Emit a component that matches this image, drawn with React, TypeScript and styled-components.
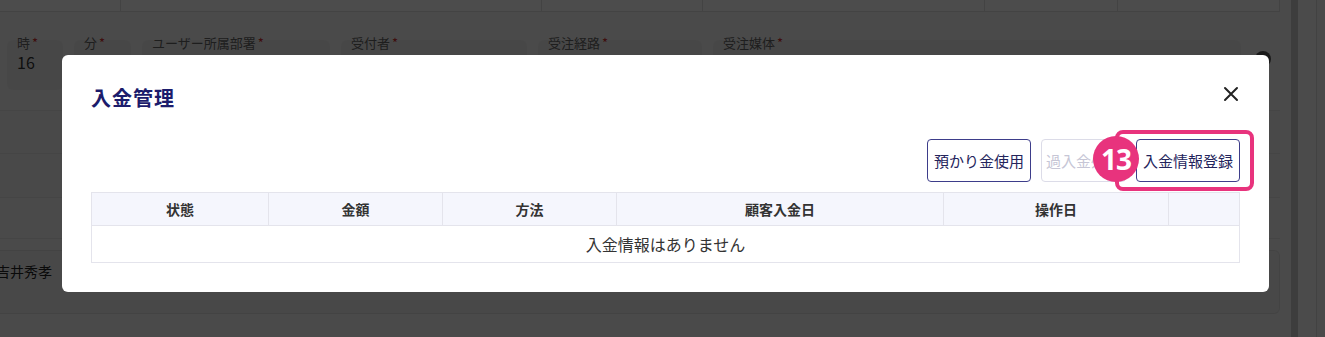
import React from "react";
import styled, { createGlobalStyle } from "styled-components";

const GlobalStyle = createGlobalStyle`
  html, body {
    margin: 0;
    padding: 0;
  }
  body {
    width: 1325px;
    height: 337px;
    overflow: hidden;
    background: #fff;
    font-family: "Noto Sans CJK JP", "Noto Sans", sans-serif;
    color: #333;
  }
  * {
    box-sizing: border-box;
  }
`;

const Page = styled.div`
  display: flex;
  width: 1325px;
  height: 337px;
  overflow: hidden;
`;

const Main = styled.div`
  width: 1280px;
  display: flex;
  flex-direction: column;
  background: #f8f8f8;
`;

const TopRow = styled.div`
  display: grid;
  grid-template-columns: 121px 421px 161px 282px 133px 162px;
  height: 12px;
  background: #fff;
  border-bottom: 1px solid #e2e2e2;
`;

const TopCell = styled.div`
  border-right: 1px solid #e2e2e2;
`;

const FieldRow = styled.div`
  display: flex;
  gap: 11px;
  margin-top: 28px;
  padding-left: 7px;
  height: 50px;
`;

const Field = styled.div<{ $w: number }>`
  width: ${({ $w }) => $w}px;
  height: 50px;
  padding: 0 10px;
  background: #efefef;
  border-radius: 6px;
  display: flex;
  flex-direction: column;
`;

const FieldLabel = styled.div`
  margin-top: -4px;
  font-size: 13px;
  line-height: 14px;
  color: #666;
  white-space: nowrap;

  span {
    color: #d32f2f;
    margin-left: 2px;
  }
`;

const FieldValue = styled.div`
  margin-top: 2px;
  font-size: 16px;
  line-height: 20px;
  color: #333;
  white-space: nowrap;
`;

const HelpDot = styled.div`
  width: 16px;
  height: 16px;
  margin: 11px 0 0 3px;
  border-radius: 50%;
  background: #555;
`;

const Spacer = styled.div`
  height: 20px;
`;

const Band = styled.div<{ $h: number }>`
  height: ${({ $h }) => $h}px;
  border-top: 1px solid #e6e6e6;
  background: ${({ $h }) => ($h > 42 ? "#f4f4f4" : "#f8f8f8")};
`;

const NameCard = styled.div`
  height: 64px;
  padding-top: 10px;
  border: 1px solid #e2e2e2;
  border-left: 0;
  border-radius: 0 6px 6px 0;
  background: #f2f2f2;
  font-size: 14px;
  line-height: 20px;
  text-indent: -4px;
  color: #222;
`;

const RightRail = styled.div`
  flex: 1;
  display: flex;
  background: #f8f8f8;
`;

const Gutter = styled.div`
  width: 11px;
`;

const Track = styled.div`
  width: 7px;
  background: #cbcbcb;
`;

const Pane = styled.div`
  width: 19px;
  border-right: 1px solid #dcdcdc;
  background: #fbfbfb;
`;

const Overlay = styled.div`
  position: fixed;
  inset: 0;
  background: rgba(0, 0, 0, 0.7);
  padding: 55px 0 0 62px;
`;

const Modal = styled.div`
  position: relative;
  width: 1207px;
  padding: 29px;
  background: #fff;
  border-radius: 6px;
`;

const ModalHeader = styled.div`
  display: flex;
  justify-content: space-between;
  height: 28px;
`;

const Title = styled.h2`
  margin: 0;
  font-size: 20px;
  line-height: 28px;
  font-weight: 700;
  letter-spacing: 1px;
  color: #1c1c6c;
`;

const CloseButton = styled.button`
  margin: 2px 1px 0 0;
  padding: 0;
  border: 0;
  background: none;
  width: 16px;
  height: 16px;
  color: #222;
  cursor: pointer;
`;

const Toolbar = styled.div`
  display: flex;
  justify-content: flex-end;
  gap: 10px;
  margin-top: 27px;
  height: 43px;
`;

const ActionButton = styled.button`
  height: 43px;
  padding: ${({ disabled }) => (disabled ? "0 4px" : "0 6px")};
  border: 1px solid ${({ disabled }) => (disabled ? "#dcdce8" : "#3d3d8a")};
  border-radius: 4px;
  background: #fff;
  font-family: "Noto Sans CJK JP", sans-serif;
  font-size: 15px;
  color: ${({ disabled }) => (disabled ? "#c6c6d6" : "#24245c")};
  white-space: nowrap;
`;

const Table = styled.table`
  margin-top: 10px;
  width: 100%;
  table-layout: fixed;
  border-collapse: collapse;
  border: 1px solid #e4e4ec;
`;

const Th = styled.th`
  height: 33px;
  padding: 0;
  background: #f5f6fd;
  border: 1px solid #e4e4ec;
  font-size: 14px;
  font-weight: 700;
  color: #333;
`;

const EmptyCell = styled.td`
  height: 37px;
  padding: 0;
  text-align: center;
  font-size: 16px;
  color: #333;
  border: 1px solid #e4e4ec;
`;

const Highlight = styled.div`
  position: absolute;
  left: 1053px;
  top: 75px;
  width: 139px;
  height: 61px;
  border: 4px solid #e8337d;
  border-radius: 8px;
`;

const StepBadge = styled.div`
  position: absolute;
  left: 1031px;
  top: 81px;
  width: 46px;
  height: 46px;
  border-radius: 50%;
  background: #e8337d;
  color: #fff;
  font-family: "Noto Sans", sans-serif;
  font-size: 28px;
  font-weight: 700;
  letter-spacing: -1px;
  display: flex;
  align-items: center;
  justify-content: center;
`;

const fields = [
  { label: "時", value: "16", w: 56 },
  { label: "分", value: "", w: 57 },
  { label: "ユーザー所属部署", value: "カスタマーサポート", w: 188 },
  { label: "受付者", value: "福岡 太郎", w: 186 },
  { label: "受注経路", value: "電話", w: 164 },
  { label: "受注媒体", value: "ウェブサイト", w: 528 },
];

const columns = [
  { name: "状態", w: 177 },
  { name: "金額", w: 174 },
  { name: "方法", w: 174 },
  { name: "顧客入金日", w: 327 },
  { name: "操作日", w: 225 },
  { name: "", w: undefined },
];

const App = () => {
  return (
    <>
      <GlobalStyle />
      <Page>
        <Main>
          <TopRow>
            {[0, 1, 2, 3, 4, 5].map((i) => (
              <TopCell key={i} />
            ))}
          </TopRow>
          <FieldRow>
            {fields.map((f) => (
              <Field key={f.label} $w={f.w}>
                <FieldLabel>
                  {f.label}
                  <span>*</span>
                </FieldLabel>
                <FieldValue>{f.value}</FieldValue>
              </Field>
            ))}
            <HelpDot />
          </FieldRow>
          <Spacer />
          <Band $h={43} />
          <Band $h={44} />
          <Band $h={41} />
          <Band $h={12} />
          <NameCard>吉井秀孝</NameCard>
        </Main>
        <RightRail>
          <Gutter />
          <Track />
          <Pane />
        </RightRail>
      </Page>

      <Overlay>
        <Modal>
          <ModalHeader>
            <Title>入金管理</Title>
            <CloseButton aria-label="閉じる">
              <svg width="16" height="16" viewBox="0 0 16 16">
                <path
                  d="M2 2 L14 14 M14 2 L2 14"
                  stroke="currentColor"
                  strokeWidth="2"
                  strokeLinecap="round"
                />
              </svg>
            </CloseButton>
          </ModalHeader>
          <Toolbar>
            <ActionButton>預かり金使用</ActionButton>
            <ActionButton disabled>過入金処理</ActionButton>
            <ActionButton>入金情報登録</ActionButton>
          </Toolbar>
          <Table>
            <colgroup>
              {columns.map((c, i) => (
                <col key={i} style={c.w ? { width: c.w } : undefined} />
              ))}
            </colgroup>
            <thead>
              <tr>
                {columns.map((c, i) => (
                  <Th key={i}>{c.name}</Th>
                ))}
              </tr>
            </thead>
            <tbody>
              <tr>
                <EmptyCell colSpan={6}>入金情報はありません</EmptyCell>
              </tr>
            </tbody>
          </Table>
          <Highlight />
          <StepBadge>13</StepBadge>
        </Modal>
      </Overlay>
    </>
  );
};

export default App;
